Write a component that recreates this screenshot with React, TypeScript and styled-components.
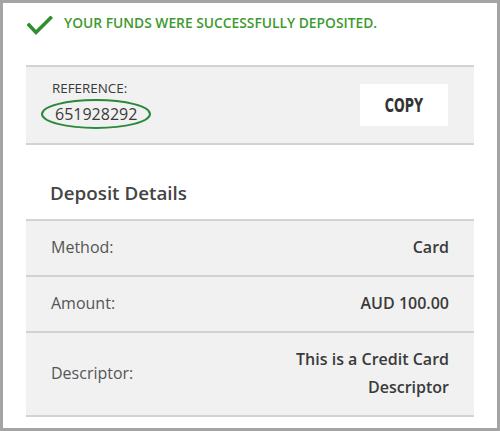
import React from "react";
import styled, { createGlobalStyle } from "styled-components";

const Global = createGlobalStyle`
  html, body { margin: 0; padding: 0; background: #fff; }
  body { font-family: "Open Sans", "Noto Sans", sans-serif; color: #444; }
  * { box-sizing: border-box; }
`;

const Frame = styled.div`
  width: 500px;
  height: 431px;
  border: 3px solid #a4a4a4;
  background: #fff;
  padding: 0 23px;
  display: flex;
  flex-direction: column;
`;

const Success = styled.div`
  display: flex;
  align-items: center;
  gap: 11px;
  height: 62px;
  padding-left: 1px;
  padding-bottom: 22px;
`;

const SuccessText = styled.span`
  color: #3d9a2f;
  font-size: 13.8px;
  line-height: 20px;
  font-weight: 600;
  text-transform: uppercase;
`;

const CheckSvg = styled.svg`
  margin-top: 6px;
  flex-shrink: 0;
`;

const RefCard = styled.div`
  display: flex;
  align-items: center;
  justify-content: space-between;
  background: #f1f1f1;
  border-top: 2px solid #d2d2d2;
  border-bottom: 2px solid #d2d2d2;
  height: 80px;
  padding: 0 25px 0 25px;
`;

const RefInfo = styled.div`
  display: flex;
  flex-direction: column;
  padding-bottom: 4px;
`;

const RefLabel = styled.span`
  font-size: 13.4px;
  line-height: 16px;
  color: #3a3a3a;
  margin-left: 1px;
  margin-bottom: 5px;
`;

const RefNumber = styled.span`
  position: relative;
  font-size: 16px;
  line-height: 26px;
  color: #3a3a3a;
  align-self: flex-start;
  margin-left: 4px;
`;

const Ellipse = styled.svg`
  position: absolute;
  left: -14px;
  top: -2px;
  width: 110px;
  height: 30px;
  overflow: visible;
`;

const CopyButton = styled.button`
  width: 88px;
  height: 42px;
  border: none;
  background: #fff;
  margin-right: 1px;
  margin-top: -1px;
  padding: 0;
  cursor: pointer;
  display: flex;
  align-items: center;
  justify-content: center;
`;

const CopyText = styled.span`
  display: inline-block;
  font-family: "DejaVu Sans", sans-serif;
  font-weight: 700;
  font-size: 19px;
  line-height: 20px;
  color: #333;
  transform: scaleX(0.66);
`;

const Heading = styled.h2`
  margin: 0;
  padding: 35px 0 13px 24px;
  font-size: 18.8px;
  line-height: 26px;
  font-weight: 600;
  color: #444;
  border-bottom: 2px solid #d2d2d2;
`;

const Row = styled.div`
  display: flex;
  justify-content: space-between;
  align-items: center;
  background: #f1f1f1;
  border-bottom: 2px solid #d2d2d2;
  padding: 12px 25px 14px 25px;
  font-size: 16px;
  line-height: 28px;
`;

const Label = styled.span`
  color: #555;
`;

const Value = styled.span`
  color: #3a3a3a;
  font-weight: 600;
  text-align: right;
  max-width: 180px;
`;

const CheckIcon = () => (
  <CheckSvg width="26" height="20" viewBox="0 0 26 20">
    <polyline
      points="2,9 9,16.5 23.5,2"
      fill="none"
      stroke="#2f8f2f"
      strokeWidth="3.6"
      strokeLinecap="square"
    />
  </CheckSvg>
);

const rows: { label: string; value: string }[] = [
  { label: "Method:", value: "Card" },
  { label: "Amount:", value: "AUD 100.00" },
  { label: "Descriptor:", value: "This is a Credit Card Descriptor" },
];

export default function App() {
  return (
    <>
      <Global />
      <Frame>
        <Success>
          <CheckIcon />
          <SuccessText>Your funds were successfully deposited.</SuccessText>
        </Success>
        <RefCard>
          <RefInfo>
            <RefLabel>REFERENCE:</RefLabel>
            <RefNumber>
              651928292
              <Ellipse viewBox="0 0 110 30">
                <ellipse cx="55" cy="15" rx="54" ry="14" fill="none" stroke="#2a8a3a" strokeWidth="2" />
              </Ellipse>
            </RefNumber>
          </RefInfo>
          <CopyButton>
            <CopyText>COPY</CopyText>
          </CopyButton>
        </RefCard>
        <Heading>Deposit Details</Heading>
        {rows.map((r) => (
          <Row key={r.label}>
            <Label>{r.label}</Label>
            <Value>{r.value}</Value>
          </Row>
        ))}
      </Frame>
    </>
  );
}
